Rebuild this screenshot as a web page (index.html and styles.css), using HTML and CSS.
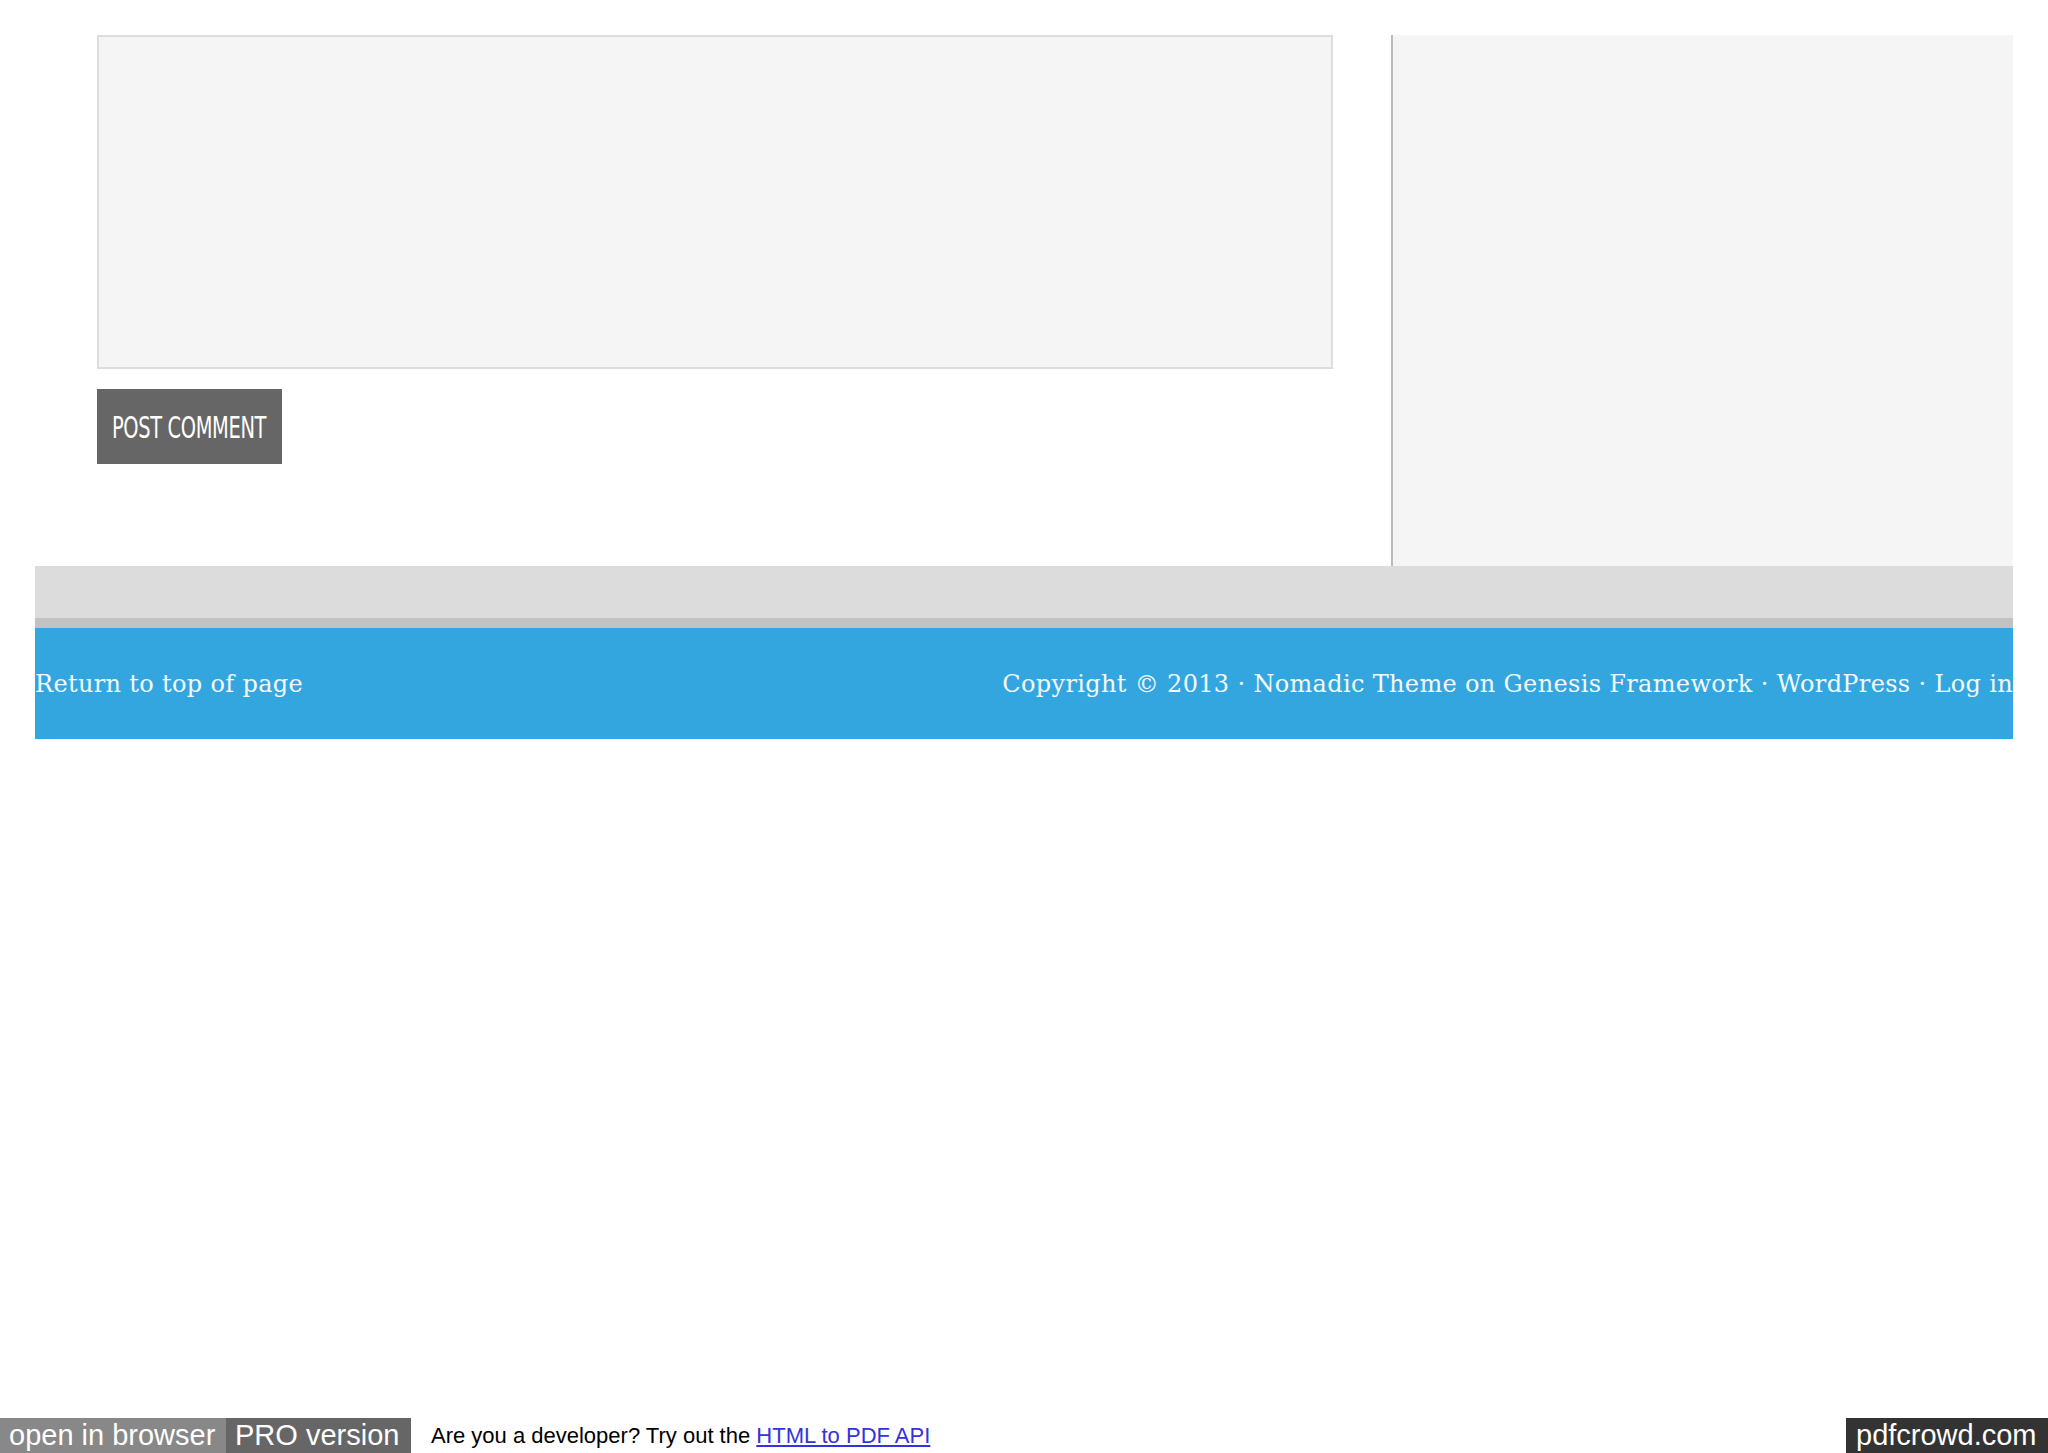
FILE: index.html
```html
<!DOCTYPE html>
<html lang="en">
<head>
<meta charset="utf-8">
<title>Post Comment</title>
<link rel="stylesheet" href="styles.css">
</head>
<body>
<div class="page">
  <div class="wrap">
    <div class="content-sidebar">
      <main class="content">
        <form class="comment-form">
          <textarea class="comment-box" aria-label="Comment"></textarea>
          <button type="button" class="submit"><span class="submit-label">POST COMMENT</span></button>
        </form>
      </main>
      <aside class="sidebar"></aside>
    </div>
    <div class="footer-widgets"></div>
    <footer class="site-footer">
      <a class="footer-link" href="#">Return to top of page</a>
      <p class="credits">Copyright © 2013 · <a href="#">Nomadic Theme</a> on <a href="#">Genesis Framework</a> · <a href="#">WordPress</a> · <a href="#">Log in</a></p>
    </footer>
  </div>
  <div class="pdfbar">
    <span class="pdf-open">open in browser</span><span class="pdf-pro">PRO version</span>
    <span class="pdf-dev">Are you a developer? Try out the <a href="#">HTML to PDF API</a></span>
    <span class="pdf-brand">pdfcrowd.com</span>
  </div>
</div>
</body>
</html>
```
FILE: styles.css
```css
html, body {
  margin: 0;
  padding: 0;
  background: #ffffff;
}

.page {
  min-height: 1453px;
  display: flex;
  flex-direction: column;
}

.wrap {
  margin: 35px 35px 0 35px;
}

.content-sidebar {
  display: flex;
  height: 531px;
}

.content {
  width: 1356px;
  padding-left: 62px;
  box-sizing: border-box;
}

.comment-form {
  display: flex;
  flex-direction: column;
  align-items: flex-start;
}

.comment-box {
  display: block;
  width: 1236px;
  height: 334px;
  box-sizing: border-box;
  margin: 0;
  border: 2px solid #dddddd;
  background: #f5f5f5;
  resize: none;
  outline: none;
}

.submit {
  margin-top: 20px;
  width: 185px;
  height: 75px;
  border: 0;
  padding: 0;
  background: #666666;
  color: #ffffff;
  display: flex;
  align-items: center;
  justify-content: center;
  cursor: pointer;
  overflow: visible;
}

.submit-label {
  display: inline-block;
  flex: none;
  white-space: nowrap;
  font-family: "Liberation Sans Narrow", "DejaVu Sans Condensed", "Liberation Sans", sans-serif;
  font-size: 30px;
  letter-spacing: -0.5px;
  transform: scaleX(0.72);
  line-height: 1;
  margin-top: 2px;
}

.sidebar {
  flex: 1;
  border-left: 2px solid #bbbbbb;
  background: #f5f5f5;
}

.footer-widgets {
  height: 52px;
  background: #dcdcdc;
  border-bottom: 10px solid #c2c2c2;
}

.site-footer {
  height: 111px;
  background: #33a6e0;
  display: flex;
  align-items: center;
  justify-content: space-between;
  font-family: "DejaVu Serif", "Liberation Serif", serif;
  font-size: 24px;
  color: #f4fbff;
  letter-spacing: 0.34px;
}

.site-footer a {
  color: #f4fbff;
  text-decoration: none;
}

.credits {
  margin: 0;
}

.pdfbar {
  margin-top: auto;
  height: 35px;
  display: flex;
  align-items: stretch;
  font-family: "Liberation Sans", Arial, sans-serif;
}

.pdf-open,
.pdf-pro,
.pdf-brand {
  display: flex;
  align-items: center;
  font-size: 29px;
  color: #ffffff;
  padding: 0 9px;
  white-space: nowrap;
}

.pdf-open {
  background: #888888;
  width: 226px;
  box-sizing: border-box;
}

.pdf-pro {
  background: #666666;
  width: 185px;
  box-sizing: border-box;
}

.pdf-dev {
  display: flex;
  align-items: center;
  margin-left: 20px;
  font-size: 22px;
  color: #000000;
  white-space: pre;
}

.pdf-dev a {
  color: #3333dd;
  text-decoration: underline;
}

.pdf-brand {
  margin-left: auto;
  background: #333333;
  width: 202px;
  box-sizing: border-box;
  padding: 0 10px;
}
```
